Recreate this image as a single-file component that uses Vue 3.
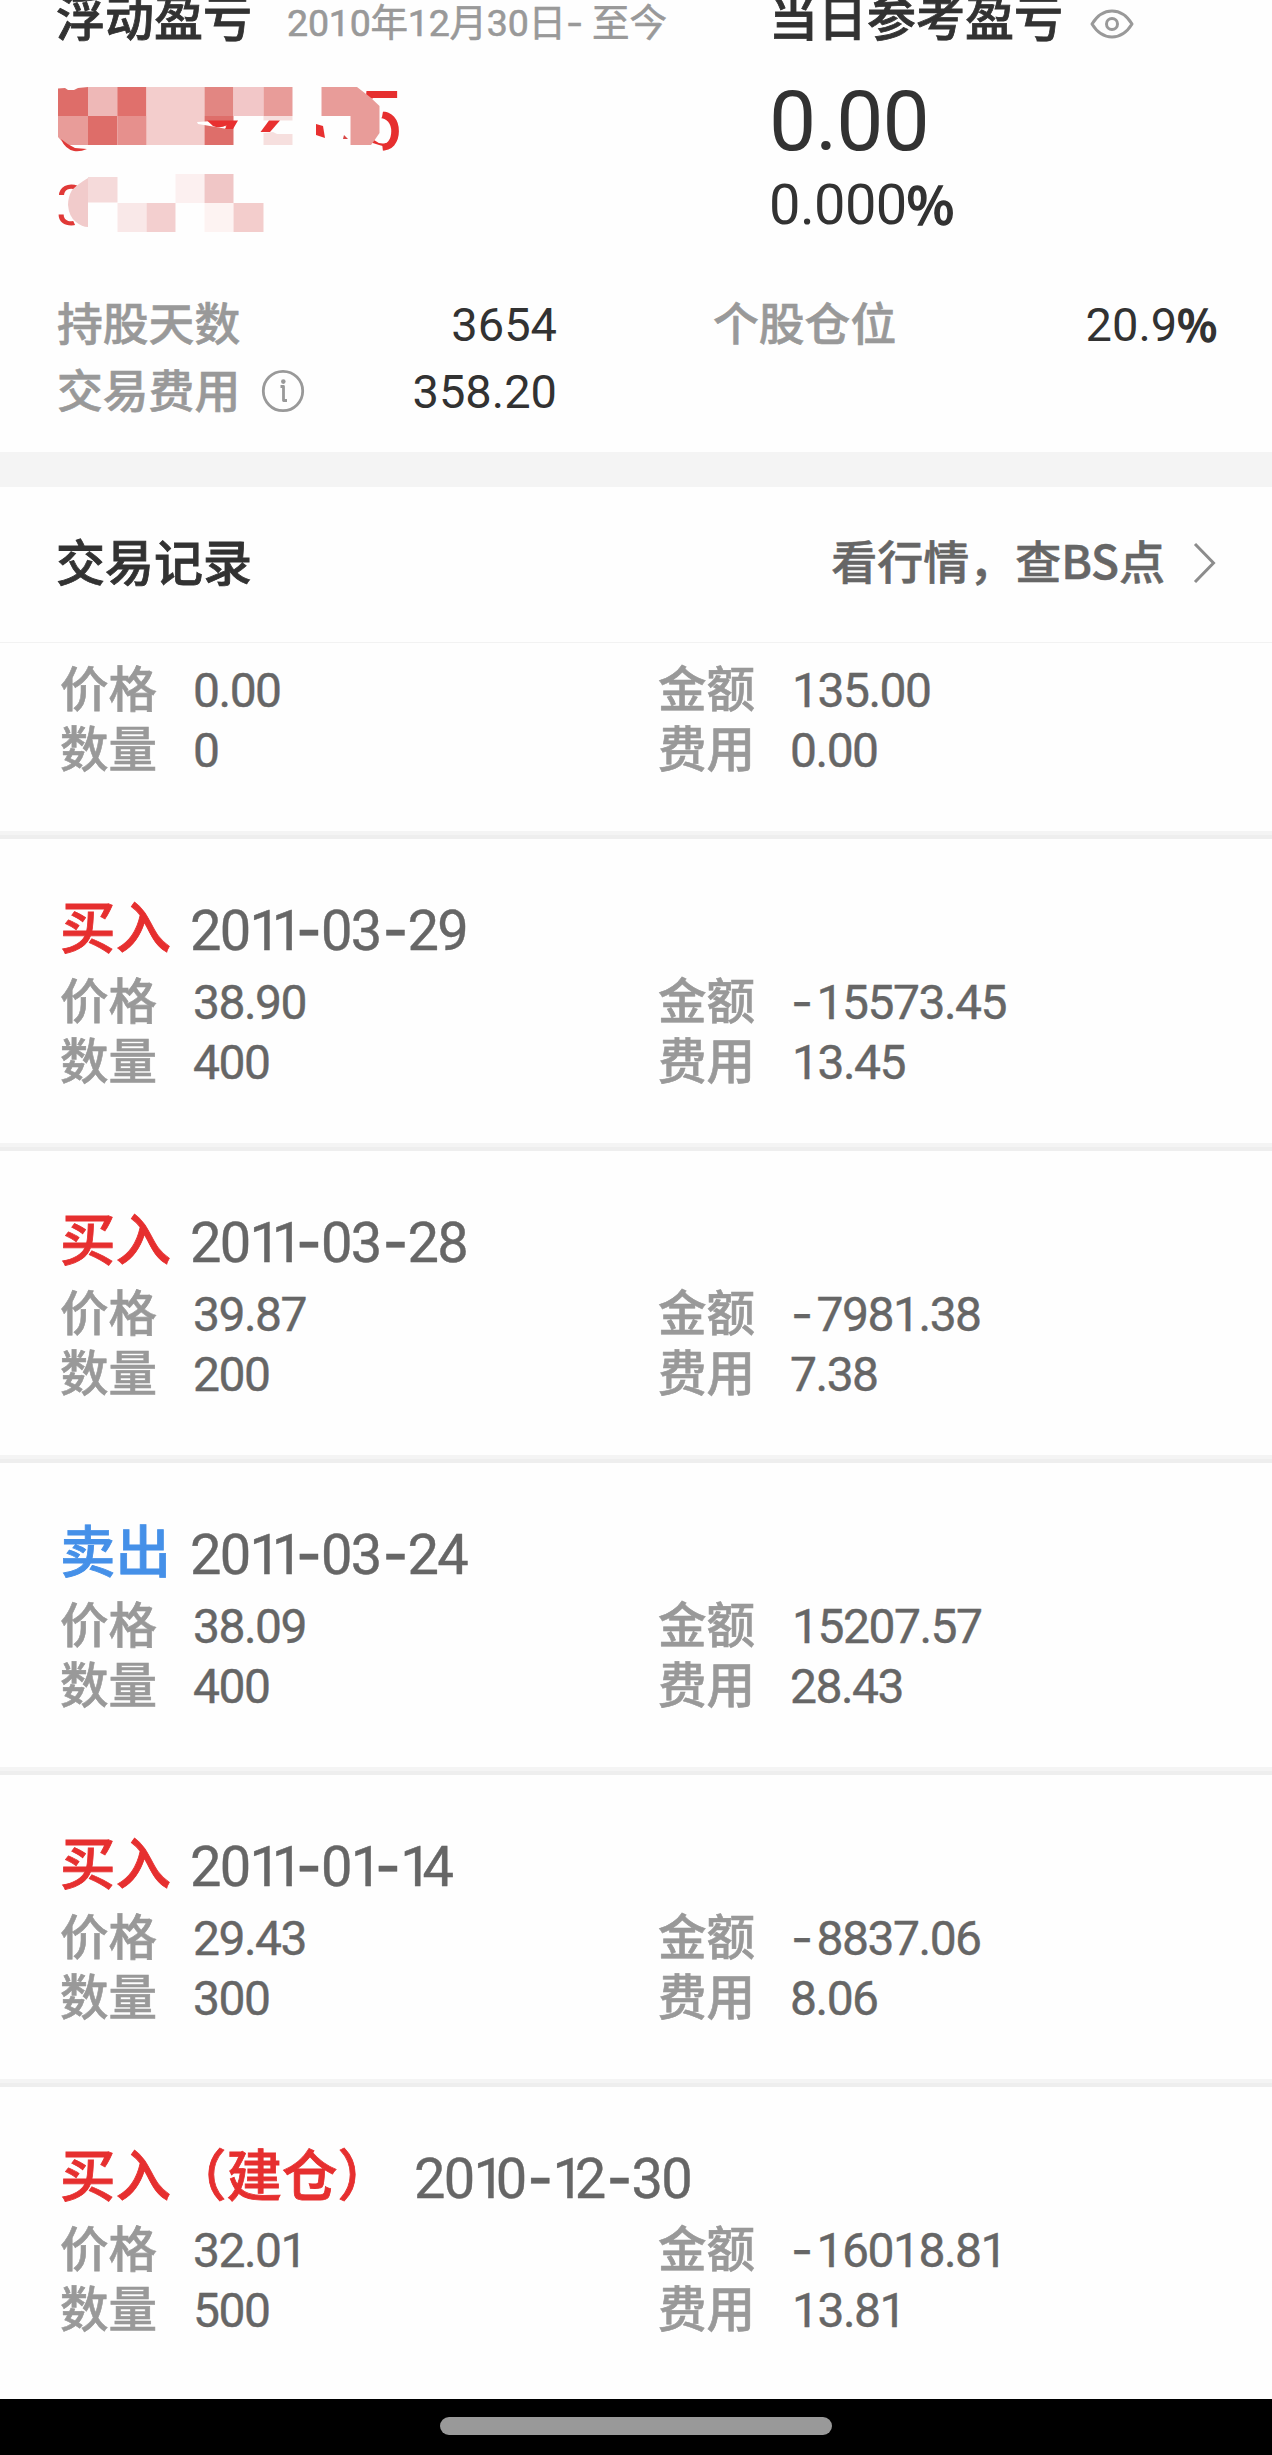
<script setup>
const records = [
  { price: '0.00', amount: '135.00', count: '0', fee: '0.00' },
  { type: '买入', kind: 'buy', date: '2011-03-29', price: '38.90', amount: '-15573.45', count: '400', fee: '13.45' },
  { type: '买入', kind: 'buy', date: '2011-03-28', price: '39.87', amount: '-7981.38', count: '200', fee: '7.38' },
  { type: '卖出', kind: 'sell', date: '2011-03-24', price: '38.09', amount: '15207.57', count: '400', fee: '28.43' },
  { type: '买入', kind: 'buy', date: '2011-01-14', price: '29.43', amount: '-8837.06', count: '300', fee: '8.06' },
  { type: '买入（建仓）', kind: 'buy open', date: '2010-12-30', price: '32.01', amount: '-16018.81', count: '500', fee: '13.81' }
]

// [x, y, width, height, color]
const blocks = [
  [88, 87, 30, 29, '#eeb8b7'],
  [117.5, 87, 29, 29, '#e0706c'],
  [146.5, 87, 58, 58, '#f3cdcc'],
  [204.5, 87, 29, 29, '#e28682'],
  [204.5, 116, 29, 29, '#de6e6a'],
  [233.5, 87, 30, 29, '#f2c7c8'],
  [263.5, 87, 29, 29, '#e89c99'],
  [263.5, 116, 29, 4.5, '#f6dfde'],
  [88, 116, 29.5, 29, '#de6d69'],
  [117.5, 116, 29, 29, '#e6908d'],
  [88, 177, 29.5, 25.5, '#f5dada'],
  [117.5, 203, 29, 29, '#f9e8e8'],
  [146.5, 203, 29, 29, '#f3cfcf'],
  [175.5, 174, 29, 29, '#fcf0f0'],
  [204.5, 174, 29, 29, '#f0c6c6'],
  [204.5, 203, 29, 29, '#fdf3f2'],
  [233.5, 203, 30, 29, '#f3cdcc']
]

function charClass(c) {
  if (c === '-') {
    return 'dash'
  } else if (c === '1') {
    return 'one'
  } else if (c === '%') {
    return 'percent'
  } else {
    return 'digit'
  }
}

function valueClass(text) {
  return text[0] === '1' ? 'leadingOne' : ''
}
</script>

<template>
<div class="page">
  <section class="summary">
    <div class="profits">
      <div class="floating">
        <div class="heading">
          <span class="title">浮动盈亏</span>
          <span class="range">2010年12月30日<span class="dash">-</span> 至今</span>
        </div>
        <svg class="mosaic" width="380" height="180" viewBox="40 70 380 180">
          <text class="hiddenBig" x="355" y="150">5</text>
          <text class="hiddenSmall" x="56" y="225">3</text>
          <path d="M340 98.5H400V111.5H383L382 117Q375 128 375 138Q376 143 382 143L384 160H340z" fill="#fefefe" />
          <path d="M368 141L374 140Q380 145 386 143L391 148Q377 145 368 141z" fill="#e62f2f" />
          <path d="M78 172L78 184L72 195H56V214H70L76 227H100V170z" fill="#fefefe" />
          <rect v-for="(b, i) in blocks" :key="i" :x="b[0]" :y="b[1]" :width="b[2]" :height="b[3]" :fill="b[4]" />
          <path d="M58 88.5L65 88L68 90L74 90L78 88L88 87V116H58z" fill="#de6d69" />
          <path d="M58 116H88V145H65L58 137z" fill="#e89c99" />
          <path d="M61 139Q68 145 75 148L87 149Q80 152 74 151Q65 149 61 139z" fill="#e03937" />
          <path d="M263.5 133L273 132L277 134L292.5 134V145H263.5z" fill="#f6dfde" />
          <path d="M321.5 87H357L370 97L379.5 106V133L374 141L371 145H350.5V116H321.5z" fill="#e89c99" />
          <path d="M197 122L213 121L225 125L227 129L216 127L198 124z" fill="#fff" />
          <path d="M207 120.5H238L233 129H225L227 125Q220 129 213 126z" fill="#e83030" />
          <path d="M269 120.5H280L270 132H260.5z" fill="#e83030" />
          <path d="M316 124L323 126L325 138L316 135z" fill="#e83030" />
          <path d="M344 135L348 139L343 139z" fill="#d94745" />
          <path d="M88 178Q78 184 72 190Q68 197 68 205Q69 217 76 222Q82 227 88 227z" fill="#f1cbcb" />
        </svg>
      </div>
      <div class="today">
        <div class="heading">
          <span class="title">当日参考盈亏</span>
          <svg class="eye" width="44" height="30" viewBox="0 0 44 30" fill="none" stroke="#999" stroke-width="3">
            <path d="M2 15Q10 2 22 2T42 15Q34 28 22 28T2 15z" stroke-linejoin="round" />
            <circle cx="22" cy="15" r="5.5" />
          </svg>
        </div>
        <div class="todayAmount">0.00</div>
        <div class="todayRate"><span v-for="(c, i) in '0.000%'" :key="i" :class="charClass(c)">{{c}}</span></div>
      </div>
    </div>
    <div class="stats">
      <div class="stat">
        <span class="label">持股天数</span>
        <span class="number">3654</span>
      </div>
      <div class="stat">
        <span class="label">个股仓位</span>
        <span class="number"><span v-for="(c, i) in '20.9%'" :key="i" :class="charClass(c)">{{c}}</span></span>
      </div>
      <div class="stat">
        <span class="label">交易费用</span>
        <svg class="info" width="44" height="44" viewBox="0 0 44 44" fill="none" stroke="#999">
          <circle cx="22" cy="22" r="19.7" stroke-width="2.8" />
          <path d="M19.5 17.5H22.5V31.5H26" stroke-width="2.8" stroke-linejoin="round" />
          <circle cx="22.3" cy="12.6" r="2.3" fill="#999" stroke="none" />
        </svg>
        <span class="number">358.20</span>
      </div>
    </div>
  </section>

  <section class="listHead">
    <span class="title">交易记录</span>
    <a class="link">看行情，查BS点</a>
    <svg class="arrow" width="26" height="44" viewBox="0 0 26 44" fill="none" stroke="#8c8c8c" stroke-width="3">
      <path d="M3 3L21.5 22L3 41" />
    </svg>
  </section>

  <section class="record" v-for="(item, key) in records" :key="key">
    <div v-if="item.date" class="recordTitle">
      <span class="type" :class="item.kind">{{item.type}}</span>
      <span class="date"><span v-for="(c, i) in item.date" :key="i" :class="charClass(c)">{{c}}</span></span>
    </div>
    <div class="row">
      <span class="label">价格</span>
      <span class="value">{{item.price}}</span>
      <span class="label">金额</span>
      <span class="value" :class="valueClass(item.amount)"><span v-if="item.amount[0] === '-'" class="minus">-</span>{{item.amount.replace('-', '')}}</span>
    </div>
    <div class="row">
      <span class="label">数量</span>
      <span class="value">{{item.count}}</span>
      <span class="label">费用</span>
      <span class="value" :class="valueClass(item.fee)">{{item.fee}}</span>
    </div>
  </section>

  <div class="navBar">
    <div class="handle"></div>
  </div>
</div>
</template>

<style>
body {
  margin: 0;
  background-color: #fefefe;
}
</style>

<style scoped>
* {
  box-sizing: border-box;
}

.page {
  width: 1272px;
  height: 2455px;
  overflow: hidden;
  display: flex;
  flex-direction: column;
  font-family: "Noto Sans CJK SC", sans-serif;
  font-weight: 500;
  color: #323232;
  white-space: nowrap;
  background-color: #fefefe;
}

.summary {
  height: 487px;
  border-bottom: #f4f4f4 solid 35px;
}

.profits {
  display: flex;
  height: 287px;
}

.floating {
  width: 769px;
}

.heading {
  display: flex;
  align-items: baseline;
  height: 60px;
  margin-top: -15px;
  line-height: 60px;
}

.floating .heading {
  padding-left: 56px;
}

.title {
  font-size: 49px;
  -webkit-text-stroke: 0.8px currentColor;
}

.label,
.link {
  -webkit-text-stroke: 0.6px currentColor;
}

.range {
  margin-left: 35px;
  font-family: Roboto, "Noto Sans CJK SC", sans-serif;
  font-size: 37.5px;
  font-weight: 400;
  letter-spacing: -0.2px;
  color: #999;
  -webkit-text-stroke: 0.6px currentColor;
}

.range .dash {
  font-family: Inter, sans-serif;
}

.mosaic {
  display: block;
  margin: 25px 0 0 40px;
}

.hiddenBig {
  font-family: Roboto, sans-serif;
  font-size: 84px;
  font-weight: 400;
  fill: #e62f2f;
}

.hiddenSmall {
  font-family: Roboto, sans-serif;
  font-size: 56px;
  font-weight: 400;
  fill: #e03937;
}

.eye {
  align-self: flex-start;
  margin: 24px 0 0 27px;
}

.todayAmount {
  margin-top: 32px;
  line-height: 90px;
  font-family: Roboto, sans-serif;
  font-size: 84px;
  font-weight: 400;
  letter-spacing: -1px;
}

.todayRate {
  height: 60px;
  margin-top: 8px;
  line-height: 60px;
  font-family: Roboto, sans-serif;
  font-size: 56px;
  font-weight: 400;
  letter-spacing: -0.6px;
}

.percent {
  font-family: "Noto Sans CJK SC", sans-serif;
  font-size: 0.9em;
  font-weight: 500;
  line-height: 1;
  -webkit-text-stroke: 1.4px currentColor;
}

.stats {
  display: grid;
  grid-template-columns: 500px 504px;
  column-gap: 156px;
  padding-left: 57px;
}

.stat {
  display: flex;
  align-items: baseline;
  height: 67px;
  line-height: 68px;
}

.stat .label {
  font-size: 45.8px;
  color: #999;
}

.number {
  margin-left: auto;
  font-family: Roboto, sans-serif;
  font-size: 47px;
  font-weight: 400;
}

.info {
  align-self: flex-start;
  margin: 15px 0 0 21px;
}

.listHead {
  display: flex;
  align-items: center;
  height: 156px;
  padding: 0 54px 11px 56px;
  border-bottom: #f2f2f2 solid 1px;
}

.link {
  margin-left: auto;
  font-size: 46px;
  color: #666;
}

.arrow {
  margin: 8px 0 0 27px;
}

.record {
  height: 312px;
  padding-top: 46px;
  border-bottom: #eee solid 4px;
  box-shadow: inset 0 -4px #f4f4f4;
}

.listHead + .record {
  height: 196px;
  padding-top: 13px;
}

.record:nth-last-child(2) {
  border-bottom: none;
  box-shadow: none;
}

.recordTitle {
  display: flex;
  align-items: flex-start;
  height: 83px;
  padding-left: 60px;
}

.type {
  width: 130px;
  font-size: 55.5px;
  line-height: 78px;
  -webkit-text-stroke: 0.8px currentColor;
}

.type.open {
  width: 354px;
}

.buy {
  color: #e62f2f;
}

.sell {
  color: #4590e8;
}

.date {
  font-family: Roboto, sans-serif;
  font-size: 56px;
  font-weight: 400;
  line-height: 91px;
  letter-spacing: -1.8px;
  color: #666;
  -webkit-text-stroke: 0.4px currentColor;
}

.date .one {
  letter-spacing: -9.2px;
}

.date .dash {
  margin: 0 1px 0 2px;
  font-family: Inter, sans-serif;
  font-weight: 500;
}

.row {
  display: grid;
  grid-template-columns: 133px 465px 132px 1fr;
  align-items: baseline;
  height: 60px;
  padding-left: 60px;
  line-height: 60px;
}

.row .label {
  font-size: 48.5px;
  color: #999;
}

.value {
  font-family: Roboto, sans-serif;
  font-size: 48px;
  font-weight: 400;
  letter-spacing: -1.5px;
  color: #666;
  -webkit-text-stroke: 0.4px currentColor;
}

.leadingOne {
  padding-left: 2px;
}

.minus {
  margin: 0 5px 0 1px;
  font-family: Inter, sans-serif;
}

.navBar {
  display: flex;
  justify-content: center;
  height: 56px;
  padding-top: 18px;
  background-color: #000;
}

.handle {
  width: 392px;
  height: 18px;
  border-radius: 9px;
  background-color: #999;
}
</style>
